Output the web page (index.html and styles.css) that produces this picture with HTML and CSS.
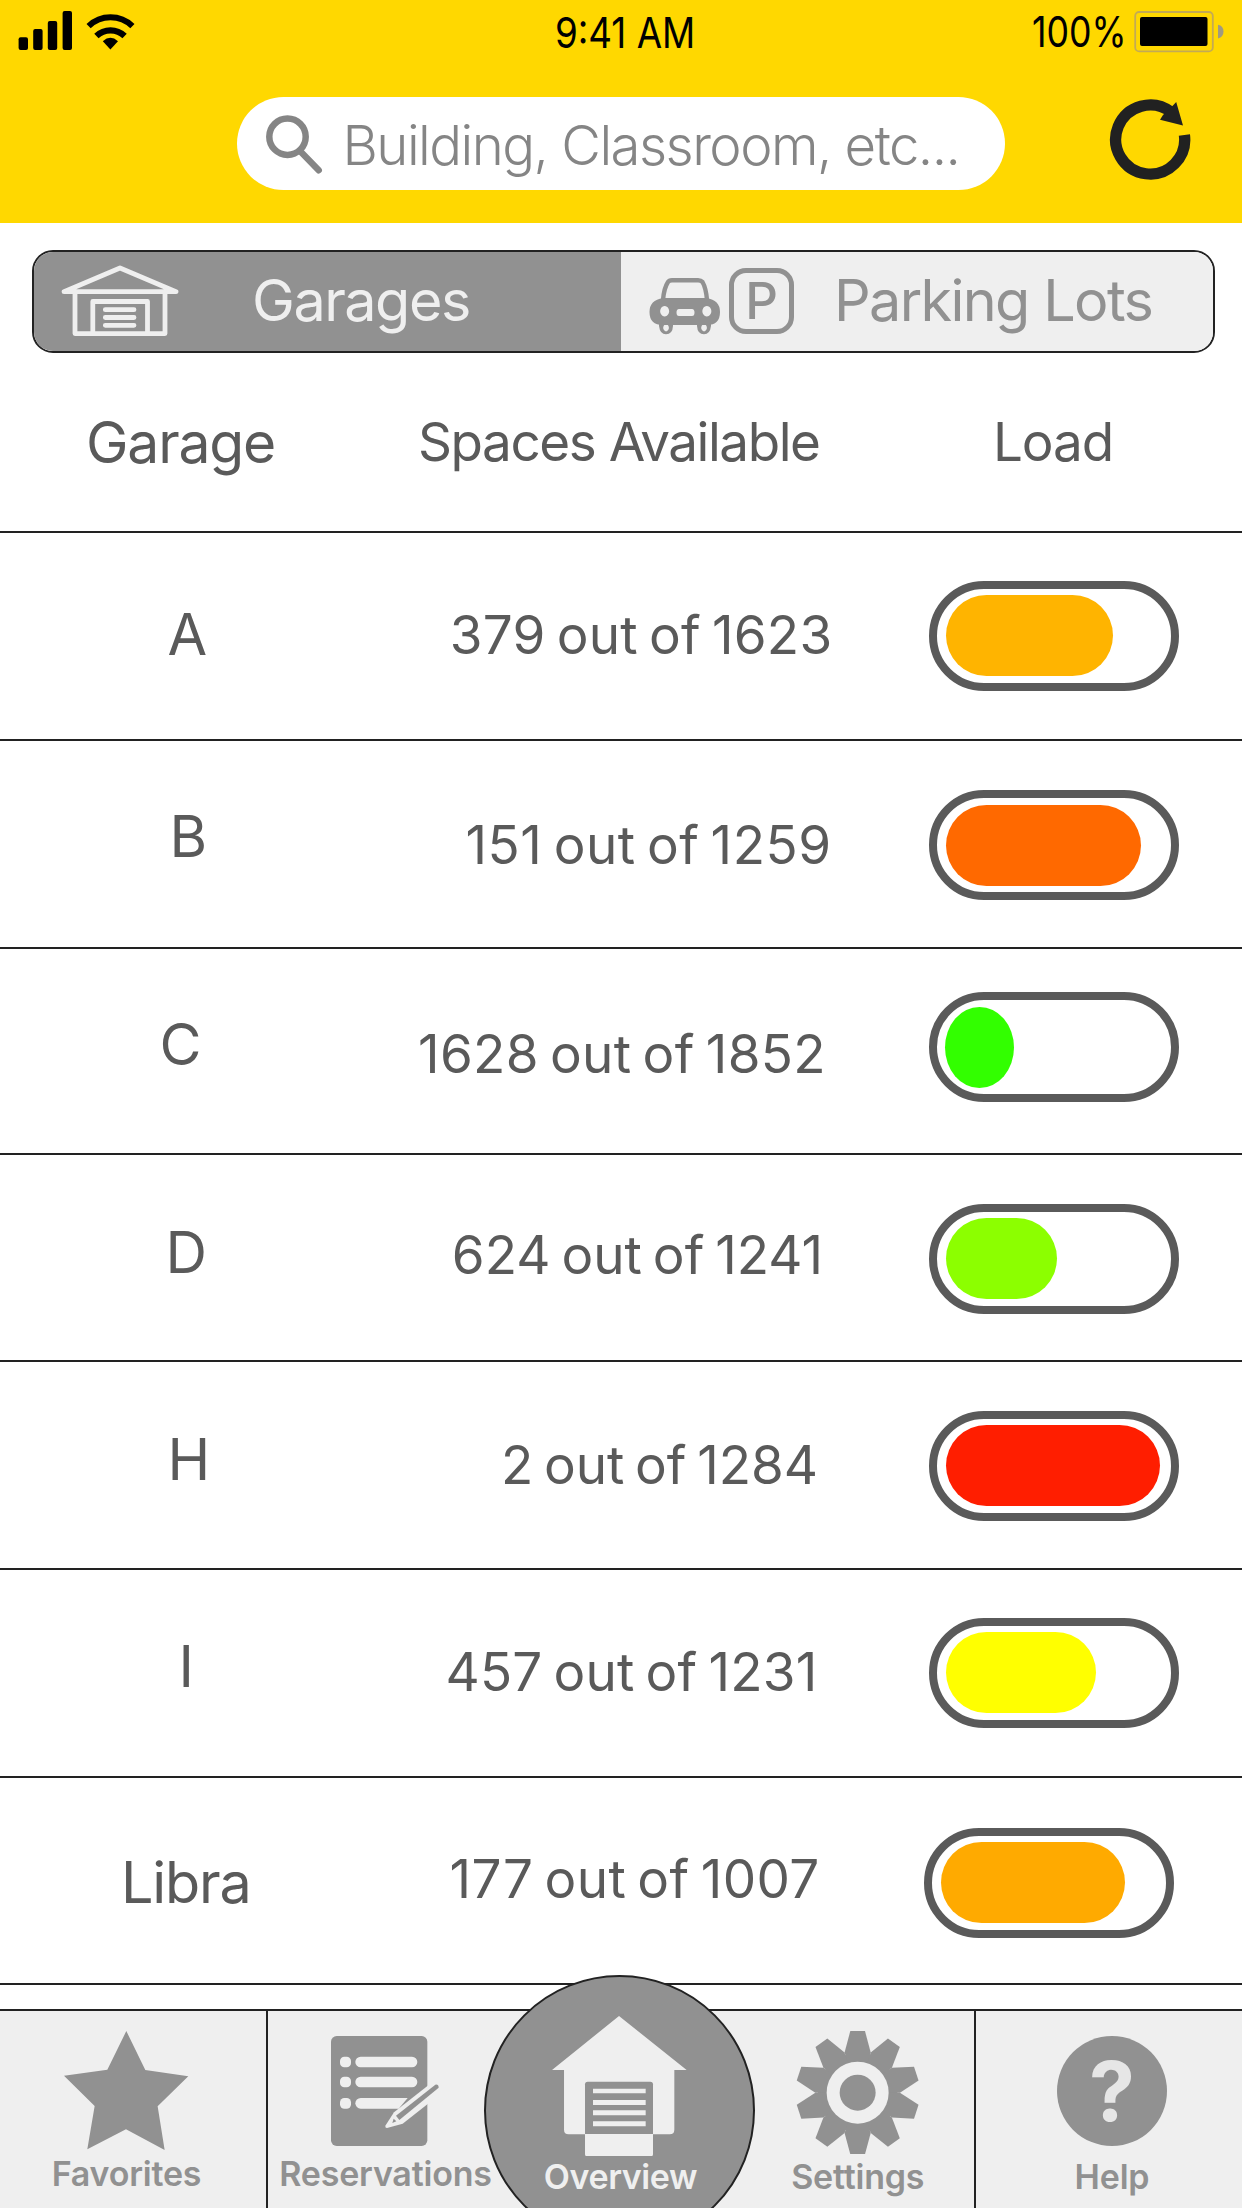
FILE: index.html
```html
<!DOCTYPE html>
<html lang="en">
<head>
<meta charset="utf-8">
<title>Garages</title>
<link rel="stylesheet" href="styles.css">
</head>
<body>
<header class="header">
  <div class="status">
    <div class="status-left">
      <svg width="118" height="42" viewBox="18 10 118 42">
        <rect x="18.6" y="37.3" width="9.4" height="12.7" rx="2"/><rect x="33.2" y="29" width="9.4" height="21" rx="2"/>
        <rect x="47.8" y="21" width="9.4" height="29" rx="2"/><rect x="62.6" y="11" width="9.4" height="39" rx="2"/>
        <g fill="none" stroke="#000"><path d="M88.6 26.1A31.5 31.5 0 0 1 132.4 26.1" stroke-width="6"/><path d="M96.4 36A20.3 20.3 0 0 1 124.6 36" stroke-width="6.2"/></g>
        <path d="M102.8 41.2Q110.4 34.5 118 41.2L110.4 49.5Z"/>
      </svg>
    </div>
    <div class="clock">9:41 AM</div>
    <div class="status-right">
      <span class="percent">100%</span>
      <svg width="91" height="44" viewBox="1134 10 91 44">
        <rect x="1135.2" y="12" width="77.6" height="39.4" rx="4" fill="none" stroke="#c3aa55" stroke-width="1.8"/>
        <rect x="1140" y="17" width="67.5" height="29" rx="2"/>
        <path d="M1218 24.8Q1223.5 26 1223.5 31.5T1218 38.4Z" fill="#a09a80"/>
      </svg>
    </div>
  </div>
  <div class="search-row">
    <div class="search">
      <svg width="60" height="62" viewBox="264 112 60 62" fill="none" stroke="#858585" stroke-width="6.5" stroke-linecap="round"><circle cx="287.5" cy="135.7" r="18.2"/><path d="M300.5 150.5L318.7 169.2"/></svg>
      <span class="placeholder">Building, Classroom, etc...</span>
    </div>
    <svg class="refresh" width="82" height="82" viewBox="1109 98 82 82"><path d="M1184.4 135A34.5 34.5 0 1 1 1171 112" fill="none" stroke="#212121" stroke-width="11.3"/><path d="M1183 125.4L1176.2 102L1171.5 107L1163 115L1160 119.8Z" fill="#212121"/></svg>
  </div>
</header>

<nav class="segments">
  <div class="segment segment-on">
    <svg class="house" width="119" height="74" viewBox="61 263 119 74" fill="none" stroke="#efefef" stroke-width="4.8" stroke-linecap="round" stroke-linejoin="round"><path d="M64 291.7L120 268L176 291.7Z"/><path d="M75 292V333.6H165V292"/><path d="M92.8 333V301.5H147.5V333"/><path d="M105.3 309.7H134M105.3 317.5H134M105.3 325.3H134"/></svg>
    <span class="segment-label">Garages</span>
  </div>
  <div class="segment segment-off">
    <svg class="car" width="72" height="58" viewBox="649 277 72 58" fill="#919191">
      <path d="M663 300Q664 288 668 282Q669 280.2 672 280.2H698Q701 280.2 702.5 282Q706 288 707 300" fill="none" stroke="#919191" stroke-width="4.4"/>
      <path fill-rule="evenodd" d="M663 298H706.500Q720 300 720 312Q720 325 707 325H663Q649.500 325 649.500 312Q649.500 300 663 298ZM679 309Q676.500 309 676.500 312.500Q676.500 316 679 316H692Q694.500 316 694.500 312.500Q694.500 309 692 309ZM664.600 306A4.500 5.200 0 1 0 664.700 306ZM706.800 306A4.500 5.200 0 1 0 706.900 306Z"/>
      <path fill-rule="evenodd" d="M659 323H673V326Q672.500 334.300 666 334.300Q660 334.300 659 326ZM666 324A2.800 3.700 0 1 0 666.100 324Z"/>
      <path fill-rule="evenodd" d="M697 323H711V326Q710 334.300 704 334.300Q697.500 334.300 697 326ZM704 324A2.800 3.700 0 1 0 704.100 324Z"/>
    </svg>
    <span class="p-sign">P</span>
    <span class="segment-label lots-label">Parking Lots</span>
  </div>
</nav>

<main class="table">
  <div class="row head"><span class="name">Garage</span><span class="spaces">Spaces Available</span><span class="load">Load</span></div>
  <div class="row row-a"><span class="name">A</span><span class="spaces">379 out of 1623</span><div class="meter"><div class="fill" style="width:167px;background:#ffb400"></div></div></div>
  <div class="row row-b"><span class="name">B</span><span class="spaces">151 out of 1259</span><div class="meter"><div class="fill" style="width:195px;background:#ff6900"></div></div></div>
  <div class="row row-c"><span class="name">C</span><span class="spaces">1628 out of 1852</span><div class="meter"><div class="fill" style="width:69px;background:#32ff00"></div></div></div>
  <div class="row row-d"><span class="name">D</span><span class="spaces">624 out of 1241</span><div class="meter"><div class="fill" style="width:111px;background:#8cff00"></div></div></div>
  <div class="row row-h"><span class="name">H</span><span class="spaces">2 out of 1284</span><div class="meter"><div class="fill" style="width:214px;background:#ff1e00"></div></div></div>
  <div class="row row-i"><span class="name">I</span><span class="spaces">457 out of 1231</span><div class="meter"><div class="fill" style="width:150px;background:#ffff00"></div></div></div>
  <div class="row row-libra"><span class="name">Libra</span><span class="spaces">177 out of 1007</span><div class="meter"><div class="fill" style="width:184px;background:#ffaa00"></div></div></div>
</main>

<footer class="tabs">
  <div class="tab favorites">
    <div class="icon"><svg width="124.300" height="119" viewBox="192 215 373 357" fill="#919191"><path d="M379 215L436 332L565 351L473 441L494 572L378 510L262 570L284 440L192 349L322 331Z"/></svg></div>
    <span class="tab-label">Favorites</span>
  </div>
  <div class="tab reservations">
    <div class="icon"><svg width="109" height="110" viewBox="992 228 327 330">
      <rect x="992" y="228" width="289" height="330" rx="17" fill="#919191"/>
      <g fill="#efefef"><rect x="1019" y="290" width="33" height="32" rx="13"/><rect x="1019" y="350" width="33" height="32" rx="13"/><rect x="1019" y="414" width="33" height="32" rx="13"/><rect x="1065" y="290" width="186" height="32" rx="16"/><rect x="1065" y="350" width="186" height="32" rx="16"/><path d="M1081 414H1222L1195 446H1081A16 16 0 0 1 1081 414Z"/></g>
      <path d="M1181 457L1285 375V430L1207 491L1160 504Q1153 504 1156 496Z" fill="#efefef"/>
      <path d="M1187 467L1305 374Q1315 372 1315 383L1197 480Z" fill="#919191"/><path d="M1176 489L1180 476L1188 484Z" fill="#919191"/>
    </svg></div>
    <span class="tab-label">Reservations</span>
  </div>
  <div class="tab overview">
    <div class="icon"><svg width="134.700" height="140.300" viewBox="276 168 404 421" fill="#efefef">
      <path d="M477 168L680 330H643V509Q643 523 629 523H326Q312 523 312 509V330H276Z"/>
      <path d="M375 523V373Q375 365 383 365H571Q579 365 579 373V523Z" fill="#919191"/>
      <path d="M399 386H557V400H399ZM399 420H557V435H399ZM399 451H557V466H399ZM399 484H557V499H399ZM375 522H579V583Q579 589 573 589H381Q375 589 375 583Z"/>
    </svg></div>
    <span class="tab-label">Overview</span>
  </div>
  <div class="tab settings">
    <div class="icon"><svg width="123.300" height="123.300" viewBox="-185 -185 370 370" fill="#919191">
      <defs><path id="tooth" d="M0 0L-39.200 -120.800L-22 -185H22L39.200 -120.800Z"/></defs>
      <circle r="119"/>
      <use href="#tooth"/><use href="#tooth" transform="rotate(36)"/><use href="#tooth" transform="rotate(72)"/><use href="#tooth" transform="rotate(108)"/><use href="#tooth" transform="rotate(144)"/><use href="#tooth" transform="rotate(180)"/><use href="#tooth" transform="rotate(216)"/><use href="#tooth" transform="rotate(252)"/><use href="#tooth" transform="rotate(288)"/><use href="#tooth" transform="rotate(324)"/>
      <circle r="93" fill="#efefef"/><circle r="54"/>
    </svg></div>
    <span class="tab-label">Settings</span>
  </div>
  <div class="tab help">
    <div class="icon"><span class="question">?</span></div>
    <span class="tab-label">Help</span>
  </div>
</footer>
</body>
</html>
```
FILE: styles.css
```css
* { box-sizing: border-box; }
body { margin: 0; width: 1242px; height: 2208px; overflow: hidden; background: #fff; color: #5a5a5a; font-family: Inter, "Liberation Sans", sans-serif; line-height: 60px; white-space: nowrap; }
svg { display: block; flex: none; }

.header { height: 223px; background: #ffd800; color: #000; }
.status { display: grid; grid-template-columns: 1fr auto 1fr; align-items: start; height: 97px; padding-top: 10px; font-size: 42.5px; line-height: 40px; }
.status-left { padding-left: 18px; }
.clock { margin: 2.500px 0 0 9px; transform: scaleX(.865); }
.status-right { display: flex; justify-content: flex-end; align-items: flex-start; gap: 7px; padding-right: 17px; }
.percent { margin-top: 2px; transform: scaleX(.84); transform-origin: right; }

.search-row { display: flex; padding-left: 236.500px; }
.search { display: flex; align-items: center; width: 768.500px; height: 93px; padding-left: 27.500px; border-radius: 47px; background: #fff; }
.placeholder { margin: 3px 0 0 18.500px; font-size: 54.500px; font-weight: 300; letter-spacing: -1.530px; color: #858585; }
.refresh { margin: 1px 0 0 104px; }

.segments { display: flex; width: 1183px; height: 103px; margin: 27px 0 0 32px; border: 2px solid #222; border-radius: 21px; overflow: hidden; }
.segment { display: flex; align-items: flex-start; }
.segment-on { width: 587px; background: #919191; color: #efefef; }
.segment-off { flex: 1; background: #efefef; color: #919191; }
.house { margin: 11px 0 0 27px; }
.segment-label { margin: 17.500px 0 0 72px; font-size: 57.500px; letter-spacing: -1.500px; }
.car { margin: 25px 0 0 28px; }
.p-sign { width: 65px; height: 66px; margin: 16px 0 0 8px; border: 5px solid #919191; border-radius: 17px; text-align: center; font-size: 51px; font-weight: 500; line-height: 56px; }
.lots-label { margin-left: 40px; letter-spacing: -1.650px; }

.row { display: grid; grid-template-columns: 400px 520px 1fr; align-items: start; height: 208px; border-bottom: 2px solid #222; }
.name { font-size: 57.500px; letter-spacing: -1.200px; }
.spaces { font-size: 53px; letter-spacing: .250px; word-spacing: -4.100px; }
.meter { width: 250px; height: 110px; margin-left: 9px; padding: 6.500px 9px; border: 8px solid #5a5a5a; border-radius: 55px; }
.fill { height: 81px; border-radius: 40.500px; }

.head { height: 180px; }
.head .name { margin: 60px 0 0 86px; font-size: 57px; letter-spacing: -1.200px; }
.head .spaces { margin: 59px 0 0 18px; letter-spacing: -1.450px; word-spacing: 0; }
.load { margin: 59px 0 0 73px; font-size: 53px; letter-spacing: -1.100px; }

.row-a .name { margin: 71px 0 0 167.500px; }
.row-a .spaces { margin: 72px 0 0 49.800px; }
.row-a .meter { margin-top: 47.500px; }
.row-b .name { margin: 64.500px 0 0 169.500px; }
.row-b .spaces { margin: 73.500px 0 0 65.500px; letter-spacing: .500px; }
.row-b .meter { margin-top: 49px; }
.row-c { height: 206px; }
.row-c .name { margin: 65px 0 0 159.500px; }
.row-c .spaces { margin: 75px 0 0 18px; letter-spacing: .330px; }
.row-c .meter { margin-top: 43px; padding-left: 8px; }
.row-c .fill { border-radius: 50%; }
.row-d { height: 207px; }
.row-d .name { margin: 66.500px 0 0 165.500px; }
.row-d .spaces { margin: 69.500px 0 0 51.800px; letter-spacing: .050px; }
.row-d .meter { margin-top: 48.500px; }
.row-h .name { margin: 67px 0 0 167.500px; }
.row-h .spaces { margin: 73px 0 0 101px; letter-spacing: -.050px; }
.row-h .meter { margin-top: 48.500px; }
.row-i { height: 208px; }
.row-i .name { margin: 66px 0 0 178.500px; }
.row-i .spaces { margin: 72px 0 0 45.500px; letter-spacing: .200px; }
.row-i .meter { margin-top: 47.500px; }
.row-libra { height: 207px; }
.row-libra .name { margin: 73.500px 0 0 121px; }
.row-libra .spaces { margin: 70.500px 0 0 49.500px; letter-spacing: .400px; }
.row-libra .meter { margin: 49.500px 0 0 4px; }

.tabs { display: flex; height: 199px; margin-top: 24px; border-top: 2px solid #222; background: #efefef; color: #919191; }
.tab { display: flex; flex-direction: column; align-items: center; }
.icon { flex: none; height: 145.500px; padding-top: 20px; }
.tab-label { font-size: 34px; font-weight: 600; line-height: 40px; letter-spacing: -.200px; }
.favorites { width: 268px; padding-right: 13px; border-right: 2px solid #222; }
.reservations { width: 216px; padding-left: 19px; }
.favorites .icon, .reservations .icon { height: 143px; }
.reservations .icon { padding-top: 25px; }
.overview { width: 271px; height: 271px; flex: none; margin-top: -36px; border: 2px solid #222; border-radius: 50%; background: #919191; color: #efefef; }
.overview .icon { height: 179.500px; padding-top: 39px; }
.overview .tab-label { padding-left: 2px; letter-spacing: -.400px; }
.settings { width: 221px; padding-right: 13.500px; border-right: 2px solid #222; }
.help { flex: 1; padding-left: 6px; }
.help .icon { padding-top: 25px; }
.question { display: block; width: 110px; height: 110px; border-radius: 50%; background: #919191; color: #e6e6e6; text-align: center; font-size: 82px; font-weight: 700; line-height: 111px; }
```
